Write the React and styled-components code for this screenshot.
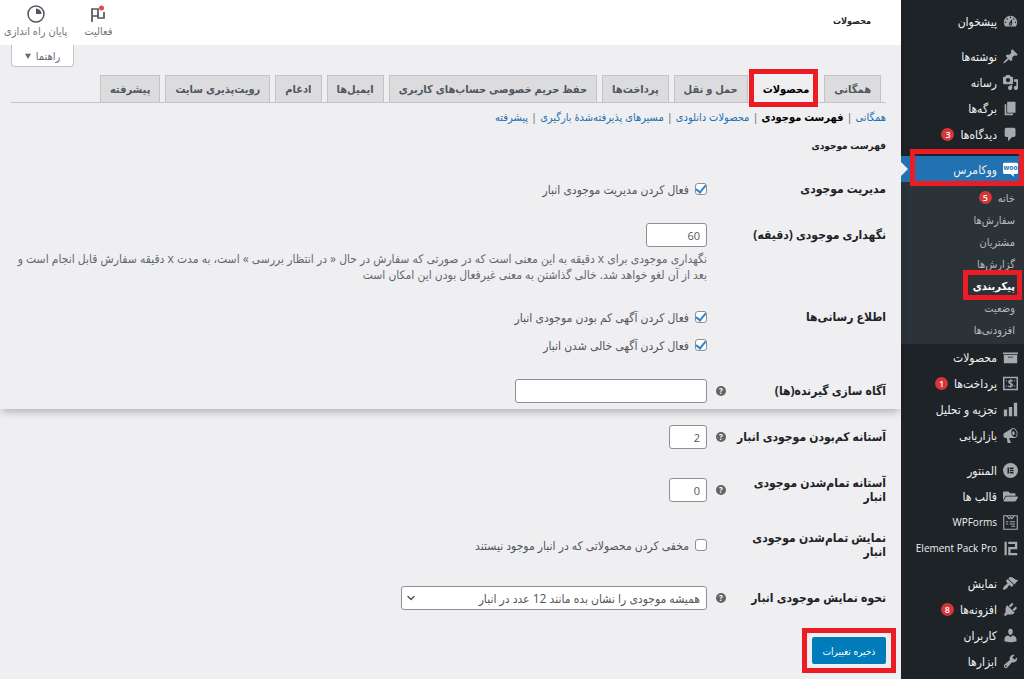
import React, { useState } from 'react';
import styled, { createGlobalStyle, css } from 'styled-components';
import { FaFolderOpen } from 'react-icons/fa';
import { FiChevronDown } from 'react-icons/fi';

const GlobalStyle = createGlobalStyle`
  * {
    box-sizing: border-box;
  }
  body {
    margin: 0;
    background-color: #efeff1;
    color: #50575e;
    font-family: 'Open Sans', 'DejaVu Sans Condensed', 'DejaVu Sans', sans-serif;
    font-size: 12px;
  }
  button, input, select {
    font-family: inherit;
    font-size: 12px;
  }
  a {
    text-decoration: none;
  }
  h1, h2, p, ul {
    margin: 0;
    padding: 0;
  }
  ul {
    list-style: none;
  }
`;

// red marker drawn around the highlighted controls
const marker = css`
  position: relative;

  &::after {
    content: '';
    position: absolute;
    inset: ${(props) => props.$inset};
    border: 5px solid #ec1c24;
    pointer-events: none;
    z-index: 2;
  }
`;

const Page = styled.div`
  display: flex;
  min-height: 100vh;
`;

/* ---------- side menu ---------- */

const Sidebar = styled.nav`
  flex: 0 0 123px;
  padding-top: 8px;
  background-color: #1d2327;
`;

const MenuGroup = styled.ul`
  margin-bottom: 9px;
`;

const MenuLink = styled.a`
  display: flex;
  align-items: center;
  gap: 6px;
  height: 26px;
  padding: 0 6px 0 0;
  color: #f0f0f1;
  font-size: ${(props) => (props.$latin ? '10px' : '12px')};
  white-space: nowrap;
  background-color: ${(props) => (props.$current ? '#2271b1' : 'transparent')};
  ${(props) => props.$current && marker}

  svg {
    flex: none;
    width: 15px;
    height: 15px;
    color: ${(props) => (props.$current ? '#fff' : '#a7aaad')};
  }

  &::before {
    content: '';
    display: ${(props) => (props.$current ? 'block' : 'none')};
    position: absolute;
    left: 0;
    border: 7px solid transparent;
    border-left-color: #efeff1;
    border-right-width: 0;
  }
`;

const Badge = styled.span`
  min-width: 13px;
  height: 13px;
  border-radius: 7px;
  background-color: #d63638;
  color: #fff;
  font-size: 9px;
  font-weight: 600;
  line-height: 13px;
  text-align: center;
`;

const SubMenu = styled.ul`
  padding: 4px 0;
  background-color: #2c3338;
`;

const SubItem = styled.li`
  display: flex;
  justify-content: flex-start;
`;

const SubLink = styled.a`
  display: flex;
  align-items: center;
  gap: 6px;
  height: 22px;
  margin-right: 9px;
  font-size: 11px;
  color: ${(props) => (props.$current ? '#fff' : '#b4b9be')};
  font-weight: ${(props) => (props.$current ? 700 : 400)};
  ${(props) => props.$current && marker}
`;

/* ---------- top bar ---------- */

const Main = styled.main`
  flex: 1;
  min-width: 0;
`;

const TopBar = styled.header`
  display: flex;
  align-items: center;
  justify-content: space-between;
  height: 45px;
  padding: 0 30px 0 4px;
  background-color: #fff;
`;

const PageTitle = styled.h1`
  padding-bottom: 4px;
  font-size: 9px;
  font-weight: 700;
  color: #1d2327;
`;

const Activity = styled.div`
  display: flex;
  gap: 17px;
`;

const ActivityButton = styled.button`
  display: flex;
  flex-direction: column;
  align-items: center;
  padding: 0 0 3px;
  border: 0;
  background: none;
  color: #757575;
  font-size: 11px;
  line-height: 14px;

  svg {
    width: 20px;
    height: 20px;
    color: #50575e;
  }
`;

const HelpRow = styled.div`
  display: flex;
  justify-content: flex-end;
  padding-left: 11px;
`;

const HelpButton = styled.button`
  display: flex;
  align-items: center;
  justify-content: center;
  gap: 5px;
  width: 63px;
  height: 22px;
  border: 1px solid #c3c4c7;
  border-top: 0;
  border-radius: 0 0 4px 4px;
  background-color: #fff;
  color: #646970;
  font-size: 11px;

  svg {
    width: 6px;
    height: 6px;
  }
`;

/* ---------- tabs ---------- */

const Tabs = styled.nav`
  display: flex;
  gap: 5px;
  margin: 8px 15px 0 11px;
  padding-right: 5px;
  border-bottom: 1px solid #c3c4c7;
`;

const Tab = styled.a`
  display: flex;
  align-items: center;
  height: 27px;
  padding: 0 9px 2px;
  border: 1px solid ${(props) => (props.$active ? 'transparent' : '#c3c4c7')};
  border-bottom: 0;
  background-color: ${(props) => (props.$active ? '#efeff1' : '#dcdcde')};
  color: ${(props) => (props.$active ? '#000' : '#50575e')};
  font-size: 11px;
  font-weight: 700;
  white-space: nowrap;
  ${(props) => props.$active && marker}
`;

const SubTabs = styled.ul`
  display: flex;
  gap: 3px;
  padding: 5px 15px 0;
  line-height: 18px;
  color: #646970;
  font-size: 11px;

  li {
    display: flex;
    gap: 3px;
  }
`;

const SubTab = styled.a`
  color: ${(props) => (props.$active ? '#000' : '#2271b1')};
  font-weight: ${(props) => (props.$active ? 700 : 400)};
`;

const SectionTitle = styled.h2`
  padding: 10px 15px 0;
  color: #1d2327;
  font-size: 10px;
  line-height: 18px;
`;

/* ---------- form ---------- */

const UpperPanel = styled.div`
  padding-bottom: 6px;
  box-shadow: 0 5px 8px -2px rgba(0, 0, 0, 0.25);
`;

const Fields = styled.div`
  display: flex;
  flex-direction: column;
  gap: ${(props) => props.$gap};
  padding: ${(props) => props.$top} 15px 0;
`;

const Row = styled.div`
  display: grid;
  grid-template-columns: 179px 1fr;
  align-items: ${(props) => (props.$tall ? 'start' : 'center')};
`;

const Head = styled.div`
  display: flex;
  align-items: center;
  justify-content: space-between;
  min-height: 24px;
  padding-left: 9px;
  color: #1d2327;
  font-weight: 700;
  line-height: 14px;
`;

const HeadText = styled.span`
  max-width: ${(props) => (props.$narrow ? '140px' : 'none')};
`;

const Tip = styled.button`
  flex: none;
  width: 10px;
  height: 10px;
  padding: 0;
  border: 0;
  border-radius: 50%;
  background-color: #646464;
  color: #fff;
  font-size: 8px;
  font-weight: 700;
  line-height: 10px;
`;

const CheckLabel = styled.label`
  display: flex;
  align-items: center;
  gap: 6px;
  height: 24px;
  color: #50575e;

  & + & {
    margin-top: 4px;
  }
`;

const Checkbox = styled.input.attrs({ type: 'checkbox' })`
  appearance: none;
  display: flex;
  align-items: center;
  justify-content: center;
  width: 12px;
  height: 12px;
  margin: 0;
  border: 1px solid #8c8f94;
  border-radius: 3px;
  background-color: #fff;

  &:checked::before {
    content: '';
    width: 4px;
    height: 8px;
    margin-bottom: 2px;
    border: solid #3582c4;
    border-width: 0 2px 2px 0;
    transform: rotate(40deg);
  }
`;

const TextField = styled.input`
  display: block;
  width: ${(props) => props.$width};
  max-width: 100%;
  height: 24px;
  padding: 0 6px;
  border: 1px solid #8c8f94;
  border-radius: 3px;
  background-color: #fff;
  color: #50575e;
  font-size: 11px;
`;

const Description = styled.p`
  margin-top: 4px;
  color: #646970;
  line-height: 16px;
`;

const SelectBox = styled.div`
  position: relative;
  width: 306px;
  max-width: 100%;

  svg {
    position: absolute;
    left: 4px;
    top: 6px;
    width: 12px;
    height: 12px;
    stroke-width: 3;
    color: #50575e;
    pointer-events: none;
  }
`;

const Select = styled.select`
  appearance: none;
  display: block;
  width: 100%;
  height: 24px;
  padding: 0 6px 0 20px;
  border: 1px solid #8c8f94;
  border-radius: 3px;
  background-color: #fff;
  color: #50575e;
`;

const Submit = styled.div`
  display: flex;
  padding: 27px 15px 14px;
`;

const SaveButton = styled.button`
  height: 27px;
  min-width: 74px;
  padding: 0 8px;
  border: 0;
  border-radius: 2px;
  background-color: #007cba;
  color: #fff;
  font-size: 10px;
  ${marker}
`;

/* ---------- icons ---------- */

const paths = {
  dashboard:
    'M3.76 16h12.48c1.1-1.37 1.76-3.11 1.76-5 0-4.42-3.58-8-8-8s-8 3.58-8 8c0 1.89.66 3.63 1.76 5zM10 4c.55 0 1 .45 1 1s-.45 1-1 1-1-.45-1-1 .45-1 1-1zM6 6c.55 0 1 .45 1 1s-.45 1-1 1-1-.45-1-1 .45-1 1-1zm8 0c.55 0 1 .45 1 1s-.45 1-1 1-1-.45-1-1 .45-1 1-1zm-5.37 5.55L12 7v6c0 1.1-.9 2-2 2s-2-.9-2-2c0-.57.24-1.08.63-1.45zM4 10c.55 0 1 .45 1 1s-.45 1-1 1-1-.45-1-1 .45-1 1-1zm12 0c.55 0 1 .45 1 1s-.45 1-1 1-1-.45-1-1 .45-1 1-1zm-5 3c0-.55-.45-1-1-1s-1 .45-1 1 .45 1 1 1 1-.45 1-1z',
  post:
    'M10.44 3.02l1.82-1.82 6.36 6.35-1.83 1.82c-1.05-.68-2.48-.57-3.41.36l-.75.75c-.92.93-1.04 2.35-.35 3.41l-1.83 1.82-2.41-2.41-2.8 2.79c-.42.42-3.38 2.71-3.8 2.29s1.86-3.39 2.28-3.81l2.79-2.79L4.1 9.36l1.83-1.82c1.05.69 2.48.57 3.4-.36l.75-.75c.93-.92 1.05-2.35.36-3.41z',
  media:
    'M13 11V4c0-.55-.45-1-1-1h-1.67L9 1H5L3.67 3H2c-.55 0-1 .45-1 1v7c0 .55.45 1 1 1h10c.55 0 1-.45 1-1zM7 4.5c1.38 0 2.5 1.12 2.5 2.5S8.38 9.5 7 9.5 4.5 8.38 4.5 7 5.62 4.5 7 4.5zM14 6h5v10.5c0 1.38-1.12 2.5-2.5 2.5S14 17.88 14 16.5s1.12-2.5 2.5-2.5c.17 0 .34.02.5.05V9h-3V6zm-4 8.05V13h2v3.5c0 1.38-1.12 2.5-2.5 2.5S7 17.88 7 16.5 8.12 14 9.5 14c.17 0 .34.02.5.05z',
  page: 'M6 15V2h10v13H6zm-1 1h8v2H3V5h2v11z',
  comments: 'M5 2h9c1.1 0 2 .9 2 2v7c0 1.1-.9 2-2 2h-2l-5 5v-5H5c-1.1 0-2-.9-2-2V4c0-1.1.9-2 2-2z',
  archive: 'M19 4v2H1V4h18zM2 7h16v10H2V7zm11 3V9H7v1h6z',
  chart: 'M18 18V2h-4v16h4zm-6 0V7H8v11h4zm-6 0v-8H2v8h4z',
  megaphone:
    'M18.15 5.94c.46 1.62.38 3.22-.02 4.48-.42 1.28-1.26 2.18-2.3 2.48-.16.06-.26.06-.4.06-.06.02-.12.02-.18.02-.06.02-.14.02-.22.02h-6.8l2.22 5.5c.02.14-.06.26-.14.34-.08.1-.24.16-.34.16H6.95c-.1 0-.26-.06-.34-.16-.08-.08-.16-.2-.14-.34l-1-5.5H4.25l-.02-.02c-.5.06-1.08-.18-1.54-.62s-.88-1.08-1.06-1.88c-.24-.8-.2-1.56-.02-2.2.18-.62.58-1.08 1.06-1.3l.02-.02 9-5.4c.1-.06.18-.1.24-.16.06-.04.14-.08.24-.12.16-.08.28-.12.5-.18 1.04-.3 2.24.1 3.22.98s1.84 2.24 2.26 3.86zm-2.58 5.98h-.02c.4-.1.74-.34 1.04-.7.58-.7.86-1.76.86-3.04 0-.64-.1-1.3-.28-1.98-.34-1.36-1.02-2.5-1.78-3.24s-1.68-1.1-2.46-.88c-.82.22-1.4.96-1.7 2-.32 1.04-.28 2.36.06 3.72.38 1.36 1 2.5 1.8 3.24.78.74 1.62 1.1 2.48.88zm-2.54-7.08c.22-.04.42-.02.62.04.38.16.76.48 1.02 1s.42 1.2.42 1.78c0 .3-.04.56-.12.8-.18.48-.44.84-.86.94-.34.1-.8-.06-1.14-.4s-.64-.86-.78-1.5c-.18-.62-.12-1.24.02-1.72s.48-.84.82-.94z',
  appearance:
    'M14.48 11.06L7.41 3.99l1.5-1.5c.5-.56 2.3-.47 3.51.32 1.21.8 1.43 1.28 2.91 2.1 1.18.64 2.45 1.26 4.45.85zm-.71.71L6.7 4.7 4.93 6.47c-.39.39-.39 1.02 0 1.41l1.06 1.06c.39.39.39 1.03 0 1.42-.6.6-1.43 1.11-2.21 1.69-.35.26-.7.53-1.01.84C1.43 14.23.4 16.08 1.4 17.07c.99 1 2.84-.03 4.18-1.36.31-.31.58-.66.85-1.02.57-.78 1.08-1.61 1.69-2.21.39-.39 1.02-.39 1.41 0l1.06 1.06c.39.39 1.02.39 1.41 0z',
  plugins:
    'M13.11 4.36L9.87 7.6 8 5.73l3.24-3.24c.35-.34 1.05-.2 1.56.32.52.51.66 1.21.31 1.55zm-8 1.77l.91-1.12 9.01 9.01-1.19.84c-.71.71-2.63 1.16-3.82 1.16H6.14L4.9 17.26c-.59.59-1.54.59-2.12 0-.59-.58-.59-1.53 0-2.12l1.24-1.24v-3.88c0-1.13.4-3.19 1.09-3.89zm7.26 3.97l3.24-3.24c.34-.35 1.04-.21 1.55.31.52.51.66 1.21.31 1.55l-3.24 3.25z',
  users:
    'M10 9.25c-2.27 0-2.73-3.44-2.73-3.44C7 4.02 7.82 2 9.97 2c2.16 0 2.98 2.02 2.71 3.81 0 0-.41 3.44-2.68 3.44zm0 2.57L12.72 10c2.39 0 4.52 2.33 4.52 4.53v2.49s-3.65 1.13-7.24 1.13c-3.65 0-7.24-1.13-7.24-1.13v-2.49c0-2.25 1.94-4.48 4.47-4.48z',
  tools:
    'M16.68 9.77c-1.34 1.34-3.3 1.67-4.95.99l-5.41 6.52c-.99.99-2.59.99-3.58 0s-.99-2.59 0-3.57l6.52-5.42c-.68-1.65-.35-3.61.99-4.95 1.28-1.28 3.12-1.62 4.72-1.06l-2.89 2.89 2.82 2.82 2.86-2.87c.53 1.58.18 3.39-1.08 4.65zM3.81 16.21c.4.39 1.04.39 1.43 0 .4-.4.4-1.04 0-1.43-.39-.4-1.03-.4-1.43 0-.39.39-.39 1.03 0 1.43z',
};

const DashIcon = ({ name }) => (
  <svg viewBox="1 1 18 18" fill="currentColor" aria-hidden="true">
    <path fillRule="evenodd" d={paths[name]} />
  </svg>
);

const WooIcon = () => (
  <svg viewBox="0 0 20 20" aria-hidden="true">
    <path d="M2 1h16a2 2 0 0 1 2 2v11a2 2 0 0 1-2 2h-4l1 4-5-4H2a2 2 0 0 1-2-2V3a2 2 0 0 1 2-2z" fill="#fff" />
    <text x="10" y="11" textAnchor="middle" fontSize="9" fontWeight="700" fill="#2271b1" direction="ltr">
      woo
    </text>
  </svg>
);

const PaymentsIcon = () => (
  <svg viewBox="0 0 20 20" aria-hidden="true">
    <rect x="1" y="2" width="18" height="16" fill="none" stroke="currentColor" strokeWidth="2" />
    <text x="10" y="15" textAnchor="middle" fontSize="13" fontWeight="700" fill="currentColor">
      $
    </text>
    <path d="M4.5 5.5v2M15.5 5.5v2M4.5 12.5v2M15.5 12.5v2" stroke="currentColor" />
  </svg>
);

const ElementorIcon = () => (
  <svg viewBox="0 0 20 20" aria-hidden="true">
    <circle cx="10" cy="10" r="10" fill="currentColor" />
    <path d="M6 6h2v8H6zM9 6h5v2H9zM9 9h5v2H9zM9 12h5v2H9z" fill="#1d2327" />
  </svg>
);

const FormsIcon = () => (
  <svg viewBox="0 0 20 20" fill="none" stroke="currentColor" strokeWidth="1.5" aria-hidden="true">
    <path d="M1 1h18v18H1zM5 1l3 4 2-2 2 2 3-4M4 9h3M9 9h7M4 12h3M9 12h7M11 15h5" />
  </svg>
);

const ElementPackIcon = () => (
  <svg viewBox="0 0 20 20" fill="currentColor" aria-hidden="true">
    <path d="M2 1h3v18H2zM7 1h12v10h-9v-3h6V4H7zM7 8h3v8h9v3H7z" />
  </svg>
);

const FlagIcon = () => (
  <svg viewBox="0 0 20 20" fill="none" stroke="currentColor" strokeWidth="1.7" aria-hidden="true">
    <path d="M4 18V5h6v7M4 12h6v2h6V8" />
    <circle cx="13.5" cy="4" r="2.5" fill="#d94f4f" stroke="none" />
  </svg>
);

const ClockIcon = () => (
  <svg viewBox="0 0 20 20" aria-hidden="true">
    <circle cx="10" cy="10" r="8" fill="none" stroke="currentColor" strokeWidth="1.5" />
    <path d="M10 4.5a5.5 5.5 0 0 1 5.5 5.5H10z" fill="currentColor" />
  </svg>
);

/* ---------- data ---------- */

const menuTop = [
  [{ label: 'پیشخوان', icon: <DashIcon name="dashboard" /> }],
  [
    { label: 'نوشته‌ها', icon: <DashIcon name="post" /> },
    { label: 'رسانه', icon: <DashIcon name="media" /> },
    { label: 'برگه‌ها', icon: <DashIcon name="page" /> },
    { label: 'دیدگاه‌ها', icon: <DashIcon name="comments" />, count: 3 },
  ],
];

const wooItems = [
  { label: 'خانه', count: 5 },
  { label: 'سفارش‌ها' },
  { label: 'مشتریان' },
  { label: 'گزارش‌ها' },
  { label: 'پیکربندی', current: true },
  { label: 'وضعیت' },
  { label: 'افزودنی‌ها' },
];

const menuBottom = [
  [
    { label: 'محصولات', icon: <DashIcon name="archive" /> },
    { label: 'پرداخت‌ها', icon: <PaymentsIcon />, count: 1 },
    { label: 'تجزیه و تحلیل', icon: <DashIcon name="chart" /> },
    { label: 'بازاریابی', icon: <DashIcon name="megaphone" /> },
  ],
  [
    { label: 'المنتور', icon: <ElementorIcon /> },
    { label: 'قالب ها', icon: <FaFolderOpen /> },
    { label: 'WPForms', icon: <FormsIcon />, latin: true },
    { label: 'Element Pack Pro', icon: <ElementPackIcon />, latin: true },
  ],
  [
    { label: 'نمایش', icon: <DashIcon name="appearance" /> },
    { label: 'افزونه‌ها', icon: <DashIcon name="plugins" />, count: 8 },
    { label: 'کاربران', icon: <DashIcon name="users" /> },
    { label: 'ابزارها', icon: <DashIcon name="tools" /> },
  ],
];

const tabs = [
  'همگانی',
  'محصولات',
  'حمل و نقل',
  'پرداخت‌ها',
  'حفظ حریم خصوصی حساب‌های کاربری',
  'ایمیل‌ها',
  'ادغام',
  'رویت‌پذیری سایت',
  'پیشرفته',
];

const subTabs = ['همگانی', 'فهرست موجودی', 'محصولات دانلودی', 'مسیرهای پذیرفته‌شدهٔ بارگیری', 'پیشرفته'];

const MenuItem = ({ item }) => (
  <li>
    <MenuLink href="#" $current={item.current} $latin={item.latin} $inset="-7px 0 -4px 9px">
      {item.icon}
      <span>{item.label}</span>
      {item.count && <Badge>{item.count}</Badge>}
    </MenuLink>
  </li>
);

const Group = ({ items }) => (
  <MenuGroup>
    {items.map((item) => (
      <MenuItem key={item.label} item={item} />
    ))}
  </MenuGroup>
);

const Field = ({ label, id, tip, tall, narrow, children }) => (
  <Row $tall={tall}>
    <Head>
      <HeadText as={id ? 'label' : 'span'} htmlFor={id} $narrow={narrow}>
        {label}
      </HeadText>
      {tip && <Tip type="button">?</Tip>}
    </Head>
    <div>{children}</div>
  </Row>
);

function App() {
  const [values, setValues] = useState({
    manage: true,
    hold: '60',
    notifyLow: true,
    notifyOut: true,
    recipients: '',
    lowStock: '2',
    outStock: '0',
    hideOut: false,
  });

  const bindText = (name) => ({
    id: name,
    value: values[name],
    onChange: (e) => setValues({ ...values, [name]: e.target.value }),
  });

  const bindCheck = (name) => ({
    checked: values[name],
    onChange: (e) => setValues({ ...values, [name]: e.target.checked }),
  });

  return (
    <Page dir="rtl" lang="fa">
      <GlobalStyle />
      <Sidebar>
        {menuTop.map((items, i) => (
          <Group key={i} items={items} />
        ))}
        <ul>
          <MenuItem item={{ label: 'ووکامرس', icon: <WooIcon />, current: true }} />
        </ul>
        <SubMenu>
          {wooItems.map((item) => (
            <SubItem key={item.label}>
              <SubLink href="#" $current={item.current} $inset="-4px -7px -4px -10px">
                {item.label}
                {item.count && <Badge>{item.count}</Badge>}
              </SubLink>
            </SubItem>
          ))}
        </SubMenu>
        {menuBottom.map((items, i) => (
          <Group key={i} items={items} />
        ))}
      </Sidebar>

      <Main>
        <UpperPanel>
          <TopBar>
            <PageTitle>محصولات</PageTitle>
            <Activity>
              <ActivityButton>
                <FlagIcon />
                فعالیت
              </ActivityButton>
              <ActivityButton>
                <ClockIcon />
                پایان راه اندازی
              </ActivityButton>
            </Activity>
          </TopBar>
          <HelpRow>
            <HelpButton>
              راهنما
              <svg viewBox="0 0 8 8" fill="currentColor" aria-hidden="true">
                <path d="M0 1h8L4 8z" />
              </svg>
            </HelpButton>
          </HelpRow>

          <Tabs>
            {tabs.map((tab, i) => (
              <Tab key={tab} href="#" $active={i === 1} $inset="-7px 0 -5px -5px">
                {tab}
              </Tab>
            ))}
          </Tabs>
          <SubTabs>
            {subTabs.map((tab, i) => (
              <li key={tab}>
                <SubTab href="#" $active={i === 1}>
                  {tab}
                </SubTab>
                {i < subTabs.length - 1 && <span>|</span>}
              </li>
            ))}
          </SubTabs>
          <SectionTitle>فهرست موجودی</SectionTitle>

          <Fields $gap="22px" $top="23px">
            <Field label="مدیریت موجودی">
              <CheckLabel>
                <Checkbox {...bindCheck('manage')} />
                فعال کردن مدیریت موجودی انبار
              </CheckLabel>
            </Field>
            <Field label="نگهداری موجودی (دقیقه)" id="hold" tall>
              <TextField $width="61px" {...bindText('hold')} />
              <Description>
                نگهداری موجودی برای x دقیقه به این معنی است که در صورتی که سفارش در حال « در انتظار بررسی » است، به
                مدت x دقیقه سفارش قابل انجام است و بعد از آن لغو خواهد شد. خالی گذاشتن به معنی غیرفعال بودن این امکان
                است
              </Description>
            </Field>
            <Field label="اطلاع رسانی‌ها" tall>
              <CheckLabel>
                <Checkbox {...bindCheck('notifyLow')} />
                فعال کردن آگهی کم بودن موجودی انبار
              </CheckLabel>
              <CheckLabel>
                <Checkbox {...bindCheck('notifyOut')} />
                فعال کردن آگهی خالی شدن انبار
              </CheckLabel>
            </Field>
            <Field label="آگاه سازی گیرنده(ها)" id="recipients" tip>
              <TextField $width="192px" {...bindText('recipients')} />
            </Field>
          </Fields>
        </UpperPanel>

        <Fields $gap="27px" $top="16px">
          <Field label="آستانه کم‌بودن موجودی انبار" id="lowStock" tip>
            <TextField $width="38px" {...bindText('lowStock')} />
          </Field>
          <Field label="آستانه تمام‌شدن موجودی انبار" id="outStock" tip narrow>
            <TextField $width="38px" {...bindText('outStock')} />
          </Field>
          <Field label="نمایش تمام‌شدن موجودی انبار" narrow>
            <CheckLabel>
              <Checkbox {...bindCheck('hideOut')} />
              مخفی کردن محصولاتی که در انبار موجود نیستند
            </CheckLabel>
          </Field>
          <Field label="نحوه نمایش موجودی انبار" id="stockFormat" tip>
            <SelectBox>
              <Select id="stockFormat">
                <option>همیشه موجودی را نشان بده مانند 12 عدد در انبار</option>
              </Select>
              <FiChevronDown />
            </SelectBox>
          </Field>
        </Fields>
        <Submit>
          <SaveButton $inset="-9px -10px">ذخیره تغییرات</SaveButton>
        </Submit>
      </Main>
    </Page>
  );
}

export default App;
